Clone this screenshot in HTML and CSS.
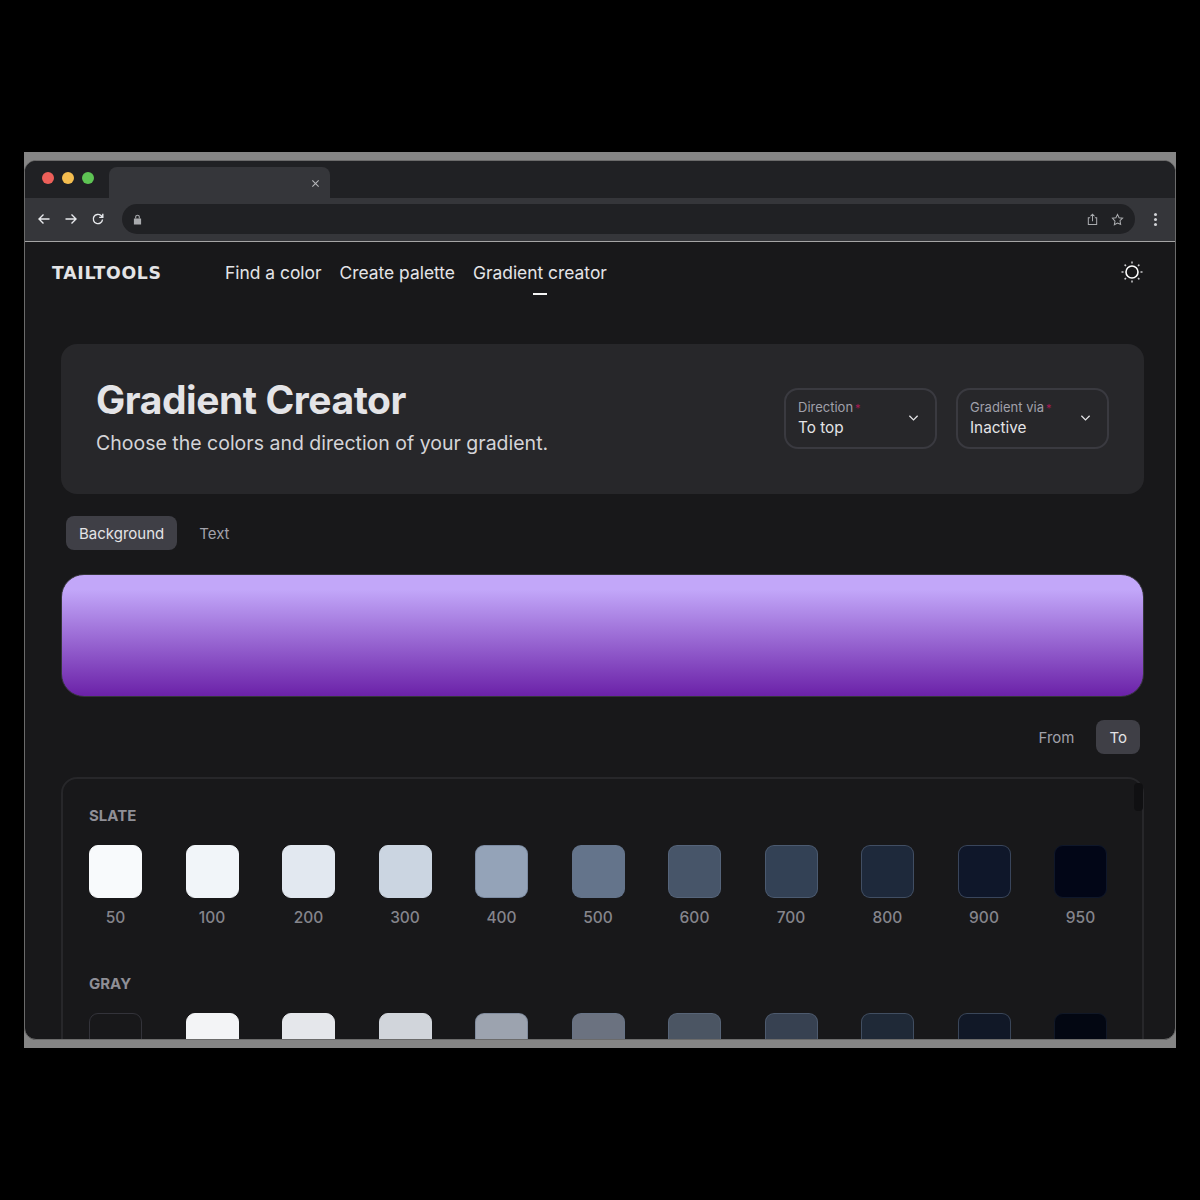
FILE: index.html
```html
<!doctype html>
<html lang="en-us">
  <head>
    <meta charset="utf-8">
    <meta name="viewport" content="width=device-width, initial-scale=1.0">
    <title>Gradient Creator</title>
    <link rel="stylesheet" href="styles.css">
  </head>
  <body>
    <div class="frame">
      <div class="window">
        <div class="tabstrip">
          <div class="lights">
            <span class="light red"></span>
            <span class="light yellow"></span>
            <span class="light green"></span>
          </div>
          <div class="tab">
            <svg class="tab-close" viewBox="0 0 10 10"><path d="M1.5 1.5l7 7M8.5 1.5l-7 7"/></svg>
          </div>
        </div>

        <div class="toolbar">
          <svg class="tool-icon" viewBox="0 0 14 14"><path d="M12.5 7H2M6.5 2.5L2 7l4.5 4.5"/></svg>
          <svg class="tool-icon" viewBox="0 0 14 14"><path d="M1.5 7H12M7.500 2.500L12 7l-4.500 4.500"/></svg>
          <svg class="tool-icon" viewBox="0 0 14 14"><path d="M11.500 7.500A4.600 4.600 0 1 1 10 3.600L11.800 5.200M11.800 1.800v3.600H8.200"/></svg>
          <div class="urlbar">
            <svg class="lock" viewBox="0 0 10 12"><path d="M1 5h8v6.500H1z"/><path class="lock-bow" d="M3 5V3.200a2 2 0 0 1 4 0V5"/></svg>
            <svg class="url-icon" viewBox="0 0 12 14"><path d="M3.500 5H1.500v7.500h9V5H8.500M6 9V1.500M3.800 3.500L6 1.300l2.200 2.200"/></svg>
            <svg class="url-icon" viewBox="0 0 14 14"><path d="M7 1.500l1.700 3.600 3.800.5-2.800 2.700.7 3.900L7 10.800l-3.400 1.900.7-3.900L1.500 5.600l3.800-.5z"/></svg>
          </div>
          <div class="kebab"><span></span><span></span><span></span></div>
        </div>

        <main class="page">
          <nav class="nav">
            <div class="logo">TAILTOOLS</div>
            <div class="nav-links">
              <a class="nav-link">Find a color</a>
              <a class="nav-link">Create palette</a>
              <a class="nav-link active">Gradient creator</a>
            </div>
            <svg class="theme-icon" viewBox="0 0 24 24">
              <circle cx="12" cy="12" r="6"/>
              <path class="rays" d="M12 1.500v2M12 20.500v2M1.500 12h2M20.500 12h2M4.600 4.600l1.400 1.400M18 18l1.400 1.400M4.600 19.400L6 18M18 6l1.400-1.400"/>
            </svg>
          </nav>

          <section class="hero">
            <div class="hero-text">
              <h1>Gradient Creator</h1>
              <p>Choose the colors and direction of your gradient.</p>
            </div>
            <div class="selects">
              <div class="select">
                <div class="select-text">
                  <label>Direction<i>*</i></label>
                  <span>To top</span>
                </div>
                <svg class="chevron" viewBox="0 0 12 8"><path d="M1.500 1.500L6 6l4.500-4.500"/></svg>
              </div>
              <div class="select">
                <div class="select-text">
                  <label>Gradient via<i>*</i></label>
                  <span>Inactive</span>
                </div>
                <svg class="chevron" viewBox="0 0 12 8"><path d="M1.500 1.500L6 6l4.500-4.500"/></svg>
              </div>
            </div>
          </section>

          <div class="pills">
            <button class="pill selected">Background</button>
            <button class="pill">Text</button>
          </div>

          <div class="preview"></div>

          <div class="pills pills-end">
            <button class="pill">From</button>
            <button class="pill selected">To</button>
          </div>

          <section class="palette">
            <div class="scroll-thumb"></div>

            <h2>SLATE</h2>
            <div class="swatches">
              <div class="swatch"><div class="chip slate-50"></div><span>50</span></div>
              <div class="swatch"><div class="chip slate-100"></div><span>100</span></div>
              <div class="swatch"><div class="chip slate-200"></div><span>200</span></div>
              <div class="swatch"><div class="chip slate-300"></div><span>300</span></div>
              <div class="swatch"><div class="chip slate-400"></div><span>400</span></div>
              <div class="swatch"><div class="chip slate-500"></div><span>500</span></div>
              <div class="swatch"><div class="chip slate-600"></div><span>600</span></div>
              <div class="swatch"><div class="chip slate-700"></div><span>700</span></div>
              <div class="swatch"><div class="chip slate-800"></div><span>800</span></div>
              <div class="swatch"><div class="chip slate-900"></div><span>900</span></div>
              <div class="swatch"><div class="chip slate-950"></div><span>950</span></div>
            </div>

            <h2>GRAY</h2>
            <div class="swatches">
              <div class="swatch"><div class="chip gray-50"></div></div>
              <div class="swatch"><div class="chip gray-100"></div></div>
              <div class="swatch"><div class="chip gray-200"></div></div>
              <div class="swatch"><div class="chip gray-300"></div></div>
              <div class="swatch"><div class="chip gray-400"></div></div>
              <div class="swatch"><div class="chip gray-500"></div></div>
              <div class="swatch"><div class="chip gray-600"></div></div>
              <div class="swatch"><div class="chip gray-700"></div></div>
              <div class="swatch"><div class="chip gray-800"></div></div>
              <div class="swatch"><div class="chip gray-900"></div></div>
              <div class="swatch"><div class="chip gray-950"></div></div>
            </div>
          </section>
        </main>
      </div>
    </div>
  </body>
</html>
```

FILE: styles.css
```css
* {
  box-sizing: border-box;
}

html, body {
  margin: 0;
  height: 1200px;
  background: #000;
  overflow: hidden;
}

body {
  padding: 152px 24px 0;
  font-family: "Inter", "Liberation Sans", sans-serif;
  color: #e4e4e7;
}

svg {
  display: block;
  fill: none;
  stroke: currentColor;
}

.frame {
  height: 896px;
  padding: 8px 0;
  background: #858585;
}

.window {
  height: 880px;
  display: flex;
  flex-direction: column;
  overflow: hidden;
  background: #18181a;
  border: 1px solid #6b6b6b;
  border-radius: 12px;
}

/* browser chrome */
.tabstrip {
  height: 37px;
  flex: none;
  display: flex;
  align-items: flex-end;
  background: #202124;
}

.lights {
  width: 84px;
  align-self: flex-start;
  padding: 11px 0 0 17px;
  display: flex;
  gap: 8px;
}

.light {
  width: 12px;
  height: 12px;
  border-radius: 50%;
}

.red { background: #ec5f59; }
.yellow { background: #f4bd4f; }
.green { background: #5ec454; }

.tab {
  width: 221px;
  height: 31px;
  padding: 12px 10px 0 0;
  display: flex;
  justify-content: flex-end;
  color: #b5b6b9;
  background: #35363a;
  border-radius: 8px 8px 0 0;
}

.tab-close {
  width: 9px;
  height: 9px;
  stroke-width: 1.2;
}

.toolbar {
  height: 44px;
  flex: none;
  padding: 0 17px 1px 12px;
  display: flex;
  align-items: center;
  gap: 13px;
  color: #e8eaed;
  background: #35363a;
  border-bottom: 1px solid #a5a5a5;
}

.tool-icon {
  width: 14px;
  height: 14px;
  stroke-width: 1.4;
}

.urlbar {
  flex: 1;
  height: 30px;
  margin: 0 6px 0 4px;
  padding: 0 11px;
  display: flex;
  align-items: center;
  gap: 12px;
  color: #a9abae;
  background: #202124;
  border-radius: 15px;
}

.lock {
  width: 9px;
  height: 11px;
  margin-right: auto;
  fill: #a9abae;
  stroke: none;
}

.lock-bow {
  fill: none;
  stroke: #a9abae;
  stroke-width: 1.2;
}

.url-icon {
  width: 13px;
  height: 13px;
  stroke-width: 1.1;
}

.kebab {
  width: 4px;
  display: flex;
  flex-direction: column;
  gap: 2px;
}

.kebab span {
  width: 3px;
  height: 3px;
  background: #d0d2d5;
  border-radius: 50%;
}

/* page */
.page {
  flex: 1;
  min-height: 0;
  padding: 0 31px 0 36px;
}

.nav {
  height: 62px;
  margin: 0 0 40px -10px;
  display: flex;
  align-items: flex-start;
}

.logo {
  width: 173px;
  margin: 21px 0 0 1px;
  font-family: "DejaVu Sans", sans-serif;
  font-size: 17.300px;
  line-height: 20px;
  font-weight: 700;
  letter-spacing: 0.75px;
  color: #e4e4e6;
}

.nav-links {
  flex: 1;
  margin-top: 20px;
  display: flex;
  gap: 18px;
}

.nav-link {
  position: relative;
  font-size: 17.400px;
  line-height: 22px;
  color: #e4e4e7;
}

.nav-link.active::after {
  content: "";
  position: absolute;
  left: 50%;
  bottom: -11px;
  width: 14px;
  height: 2px;
  margin-left: -7px;
  background: #f4f4f5;
}

.theme-icon {
  width: 24px;
  height: 24px;
  margin: 18px 0 0 0;
  color: #fff;
  stroke-width: 1.6;
}

.rays {
  stroke: #c9c9cc;
  stroke-width: 1.5;
}

.hero {
  height: 150px;
  margin-bottom: 22px;
  padding: 0 35px;
  display: flex;
  align-items: center;
  justify-content: space-between;
  background: #27272a;
  border-radius: 16px;
}

.hero-text {
  margin-bottom: 4px;
}

.hero h1 {
  margin: 0;
  font-size: 39px;
  line-height: 44px;
  font-weight: 700;
  letter-spacing: -0.45px;
  color: #e4e4e7;
}

.hero p {
  margin: 8px 0 0;
  font-size: 19.500px;
  line-height: 26px;
  color: #d4d4d8;
}

.selects {
  margin-bottom: 2px;
  display: flex;
  gap: 19px;
}

.select {
  width: 153px;
  height: 61px;
  padding: 0 16px 0 12px;
  display: flex;
  align-items: center;
  justify-content: space-between;
  border: 2px solid #3a3a40;
  border-radius: 14px;
}

.select-text {
  display: flex;
  flex-direction: column;
}

.select label {
  font-size: 13px;
  line-height: 18px;
  color: #a1a1aa;
}

.select i {
  margin-left: 2px;
  font-style: normal;
  font-size: 11px;
  color: #a81a52;
}

.select span {
  font-size: 15.300px;
  line-height: 21px;
  color: #e4e4e7;
}

.chevron {
  width: 11px;
  height: 8px;
  stroke-width: 1.4;
  color: #e4e4e7;
}

.pills {
  height: 34px;
  margin-left: 5px;
  display: flex;
  gap: 9px;
}

.pills-end {
  margin: 0 4px 23px 0;
  justify-content: flex-end;
}

.pill {
  padding: 0 13px;
  font: inherit;
  font-size: 15px;
  color: #a1a1aa;
  background: none;
  border: 0;
  border-radius: 8px;
}

.pill.selected {
  color: #e4e4e7;
  background: #3f3f46;
}

.preview {
  height: 123px;
  margin: 24px 0 23px;
  background: linear-gradient(to top, #6b21a8, #c2a7f9 88%);
  border: 1px solid #35353b;
  border-radius: 23px;
}

.palette {
  position: relative;
  height: 280px;
  padding: 27px 35px 0 26px;
  border: 2px solid #27272a;
  border-radius: 16px;
}

.scroll-thumb {
  position: absolute;
  top: 4px;
  right: -1px;
  width: 9px;
  height: 28px;
  background: #101012;
  border-radius: 4px;
}

.palette h2 {
  margin: 0 0 19px;
  font-size: 15px;
  line-height: 20px;
  font-weight: 700;
  color: #8f8f96;
}

.swatches {
  height: 129px;
  display: flex;
  justify-content: space-between;
}

.swatch {
  width: 53px;
  display: flex;
  flex-direction: column;
  align-items: center;
  gap: 10px;
}

.swatch span {
  font-size: 15.500px;
  line-height: 20px;
  font-weight: 500;
  color: #85858c;
}

.chip {
  width: 53px;
  height: 53px;
  flex: none;
  border: 1px solid rgba(100, 116, 139, 0.5);
  border-radius: 9px;
}

.slate-50 { background: #f8fafc; border-color: #f8fafc; }
.slate-100 { background: #f1f5f9; border-color: #f1f5f9; }
.slate-200 { background: #e2e8f0; border-color: #e2e8f0; }
.slate-300 { background: #cbd5e1; border-color: #cbd5e1; }
.slate-400 { background: #94a3b8; }
.slate-500 { background: #64748b; }
.slate-600 { background: #475569; }
.slate-700 { background: #334155; }
.slate-800 { background: #1e293b; }
.slate-900 { background: #0f172a; }
.slate-950 { background: #020617; border-color: #0f172a; }

.gray-50 { background: #18181a; border-color: #33333a; }
.gray-100 { background: #f3f4f6; border-color: #f3f4f6; }
.gray-200 { background: #e5e7eb; border-color: #e5e7eb; }
.gray-300 { background: #d1d5db; border-color: #d1d5db; }
.gray-400 { background: #9ca3af; }
.gray-500 { background: #6b7280; }
.gray-600 { background: #4b5563; }
.gray-700 { background: #374151; }
.gray-800 { background: #1f2937; }
.gray-900 { background: #111827; }
.gray-950 { background: #030712; border-color: #111827; }
```
